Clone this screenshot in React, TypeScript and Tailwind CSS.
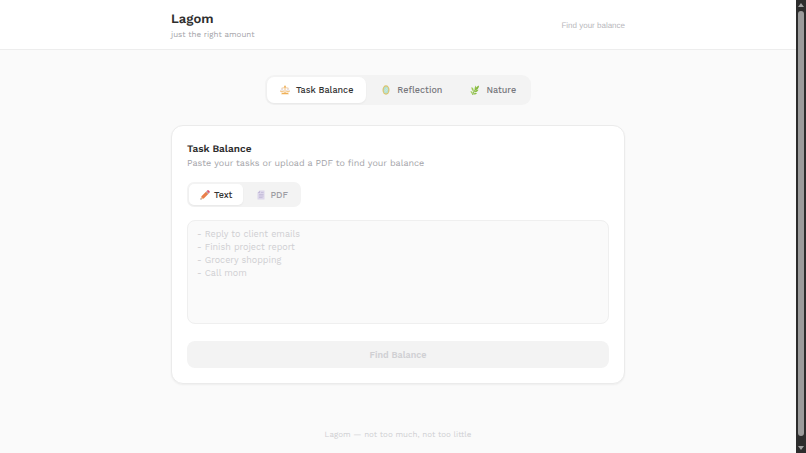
import React from 'react';
import clsx from 'clsx';

const ScaleIcon = () => (
  <svg viewBox="0 0 20 20" className="w-[10px] h-[10px]" fill="none">
    <circle cx="10" cy="2.8" r="1.8" fill="#f0b35c" />
    <path d="M10 3v13" stroke="#eeb062" strokeWidth="1.6" />
    <path d="M3 6.5c3 0 4-1.500 7-1.500s4 1.500 7 1.500" stroke="#efb469" strokeWidth="1.400" />
    <path d="M4 7 1 12M4 7l3 5M16 7l-3 5M16 7l3 5" stroke="#c9b8c9" strokeWidth="1" />
    <path d="M0 11.500h8c0 2-1.600 3.400-4 3.400s-4-1.400-4-3.400zM12 11.500h8c0 2-1.600 3.400-4 3.400s-4-1.400-4-3.400z" fill="#f4c98c" />
    <path d="M2.500 18.500c0-2 3-3.500 7.500-3.500s7.500 1.500 7.500 3.500z" fill="#efb056" />
  </svg>
);

const MirrorIcon = () => (
  <svg viewBox="0 0 20 20" className="w-[10px] h-[10px]">
    <ellipse cx="10" cy="10" rx="7" ry="9.500" fill="#dcc46c" />
    <ellipse cx="10" cy="10" rx="4.600" ry="7.100" fill="#b4e0d2" />
    <path d="M7.500 11.500 12 5.500M8.500 14.500l5-7" stroke="#d4f0e2" strokeWidth="1.200" />
  </svg>
);

const HerbIcon = () => (
  <svg viewBox="0 0 20 20" className="w-[10px] h-[10px]">
    <path d="M5 19.500C7 14 10 9 16 3" stroke="#7fae3a" strokeWidth="2" fill="none" />
    <path d="M9.500 11c-1-4 0-7 2-10 2 4 1 8-2 10z" fill="#93c34a" />
    <path d="M10 11c1-5 4-8 8-10 0 5-3 9-8 10z" fill="#86b93f" />
    <path d="M7.500 14C4 11 2.500 8 3 4c3.500 1.500 5 5 4.500 10z" fill="#9ccb57" />
    <path d="M8 14.500c2-4 5-5 9-5-2 4-5 5.500-9 5z" fill="#8dbf45" />
    <path d="M6 18c-3 0-4.500-2-5-6 3 0 5 2 5 6z" fill="#a5d065" />
    <path d="M6 18.500c2-2.500 5-3 8-1.500-2.500 2.500-5 2.500-8 1.500z" fill="#8dbf45" />
  </svg>
);

const PencilIcon = () => (
  <svg viewBox="0 0 20 20" className="w-[10px] h-[10px]">
    <path d="m1 19 1.500-6 4.500 4.500z" fill="#edc09a" />
    <path d="m1 19 .6-2.400 1.800 1.800z" fill="#4b4147" />
    <path d="M2.500 13 12 3.500 16.500 8 7 17.500z" fill="#e67a45" />
    <path d="m4 14.500 9.500-9.500 1.500 1.500-9.500 9.500z" fill="#ec8350" />
    <path d="m12 3.500 1.500-1.500L18 6.500 16.500 8z" fill="#a9a4b0" />
    <path d="m13.500 2 .8-.8c1-1 2.500-1 3.500 0l1 1c1 1 1 2.500 0 3.500l-.8.8z" fill="#d9506a" />
  </svg>
);

const PageIcon = () => (
  <svg viewBox="0 0 20 20" className="w-[10px] h-[10px]">
    <path d="M8 1h9v18H3V6z" fill="#dcd6ea" />
    <path d="M8 1v5H3z" fill="#c3b9d9" />
    <path d="M10 5h5M6 9h9M6 12h9M6 15h7" stroke="#bfb6d6" strokeWidth="1.400" />
  </svg>
);

const tabs = [
  { id: 'tasks', label: 'Task Balance', icon: <ScaleIcon /> },
  { id: 'reflection', label: 'Reflection', icon: <MirrorIcon /> },
  { id: 'nature', label: 'Nature', icon: <HerbIcon /> },
];

const modes = [
  { id: 'text', label: 'Text', icon: <PencilIcon /> },
  { id: 'pdf', label: 'PDF', icon: <PageIcon /> },
];

const Scrollbar = () => (
  <div className="sticky top-0 flex h-screen w-[10px] shrink-0 flex-col items-center justify-between bg-[#2c2c2c] py-[3px]" aria-hidden="true">
    <svg viewBox="0 0 6 4" className="w-[6px] h-[4px]"><path d="M3 0 6 4H0z" fill="#a0a0a0" /></svg>
    <div className="mt-1 mb-[10px] w-[6px] flex-1 rounded-full bg-[#9b9b9b]"></div>
    <svg viewBox="0 0 6 4" className="w-[6px] h-[4px]"><path d="M0 0h6L3 4z" fill="#a0a0a0" /></svg>
  </div>
);

const App = () => {
  const [tab, setTab] = React.useState('tasks');
  const [mode, setMode] = React.useState('text');
  const [text, setText] = React.useState('');

  return (
    <div className="flex min-h-screen bg-[#fafafa] font-['Work_Sans','Inter',sans-serif] text-[#2d2d2d] [text-rendering:geometricPrecision]">
      <div className="min-w-0 flex-1">
        <header className="border-b border-[#ededed] bg-white">
          <div className="mx-auto flex max-w-[454px] items-center justify-between pt-[11px] pb-[9px]">
            <div>
              <h1 className="text-[13px] leading-[18px] font-semibold">Lagom</h1>
              <p className="text-[8px] leading-[11px] text-[#a3a3a8]">just the right amount</p>
            </div>
            <p className="font-['Liberation_Sans',sans-serif] text-[8px] leading-[11px] text-[#b8b8bc]">Find your balance</p>
          </div>
        </header>

        <main className="mx-auto max-w-[454px] pt-[25px]">
          <nav className="mx-auto flex w-fit gap-[2px] rounded-[9px] bg-[#f3f3f3] p-[2px]">
            {tabs.map((t) => (
              <button
                key={t.id}
                onClick={() => setTab(t.id)}
                className={clsx(
                  'flex h-[26px] items-center gap-[6px] rounded-[7px] px-[13px] text-[9px] leading-[14px] font-medium',
                  tab === t.id ? 'bg-white text-[#333333] shadow-xs' : 'text-[#77777c]'
                )}
              >
                {t.icon}
                {t.label}
              </button>
            ))}
          </nav>

          <section className="mt-5 rounded-[12px] border border-[#ebebeb] bg-white px-[15px] pt-4 pb-[15px] shadow-xs">
            <h2 className="text-[10px] leading-[15px] font-semibold">Task Balance</h2>
            <p className="text-[9px] leading-[15px] text-[#a3a3a8]">Paste your tasks or upload a PDF to find your balance</p>

            <div className="mt-[10px] flex w-fit gap-[2px] rounded-[7px] bg-[#f3f3f3] p-[2px]">
              {modes.map((m) => (
                <button
                  key={m.id}
                  onClick={() => setMode(m.id)}
                  className={clsx(
                    'flex h-[21px] items-center gap-1 rounded-[5px] px-[11px] text-[9px] leading-[14px] font-medium',
                    mode === m.id ? 'bg-white text-[#333333] shadow-xs' : 'text-[#9d9da3]'
                  )}
                >
                  {m.icon}
                  {m.label}
                </button>
              ))}
            </div>

            <textarea
              aria-label="Your tasks"
              value={text}
              onChange={(e) => setText(e.target.value)}
              placeholder={'- Reply to client emails\n- Finish project report\n- Grocery shopping\n- Call mom'}
              className="mt-[13px] block h-[104px] w-full resize-none rounded-[8px] border border-[#efefef] bg-[#fafafa] px-[9px] py-[7px] text-[9px] leading-[13px] outline-none placeholder:text-[#cfcfd2]"
            />

            <button disabled={!text.trim()} className="mt-[17px] h-[27px] w-full rounded-[8px] bg-[#f3f3f3] text-[9px] leading-[14px] font-semibold text-[#d0d0d3]">
              Find Balance
            </button>
          </section>
        </main>

        <footer className="pt-[45px] pb-[13px] text-center text-[8px] leading-[11px] text-[#cfcfd2]">
          Lagom — not too much, not too little
        </footer>
      </div>
      <Scrollbar />
    </div>
  );
};

export default App;
